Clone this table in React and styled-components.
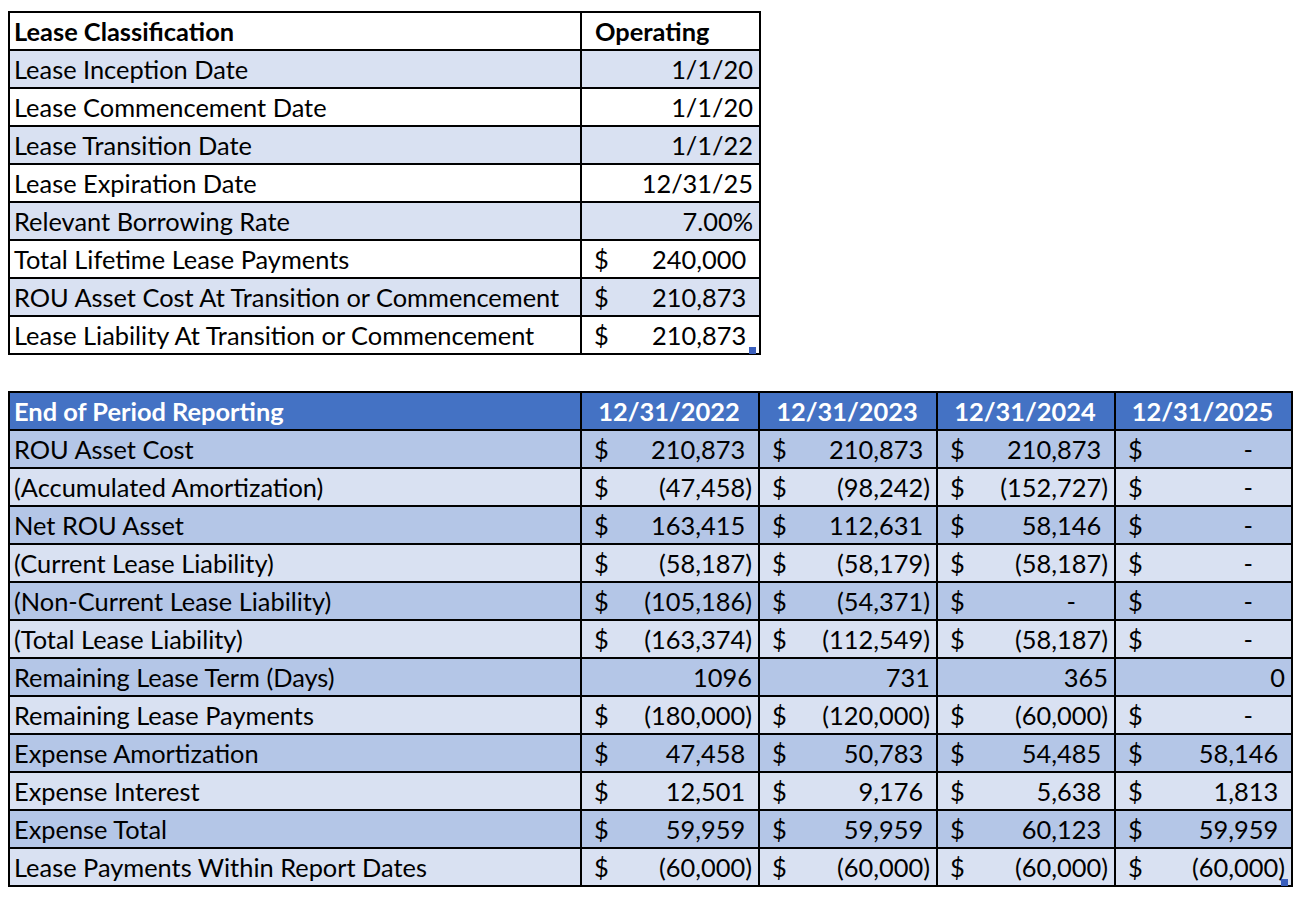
import React from "react";
import styled, { createGlobalStyle } from "styled-components";

const GlobalStyle = createGlobalStyle`
  body {
    margin: 0;
    background: #ffffff;
    font-family: "Lato", "Liberation Sans", sans-serif;
    color: #000;
  }
`;

const summary = [
  { label: "Lease Inception Date", value: "1/1/20" },
  { label: "Lease Commencement Date", value: "1/1/20" },
  { label: "Lease Transition Date", value: "1/1/22" },
  { label: "Lease Expiration Date", value: "12/31/25" },
  { label: "Relevant Borrowing Rate", value: "7.00%" },
  { label: "Total Lifetime Lease Payments", value: "240,000", money: true },
  { label: "ROU Asset Cost At Transition or Commencement", value: "210,873", money: true },
  { label: "Lease Liability At Transition or Commencement", value: "210,873", money: true },
];

const dates = ["12/31/2022", "12/31/2023", "12/31/2024", "12/31/2025"];

const report = [
  ["ROU Asset Cost", ["210,873", "210,873", "210,873", "-"]],
  ["(Accumulated Amortization)", ["(47,458)", "(98,242)", "(152,727)", "-"]],
  ["Net ROU Asset", ["163,415", "112,631", "58,146", "-"]],
  ["(Current Lease Liability)", ["(58,187)", "(58,179)", "(58,187)", "-"]],
  ["(Non-Current Lease Liability)", ["(105,186)", "(54,371)", "-", "-"]],
  ["(Total Lease Liability)", ["(163,374)", "(112,549)", "(58,187)", "-"]],
  ["Remaining Lease Term (Days)", ["1096", "731", "365", "0"], true],
  ["Remaining Lease Payments", ["(180,000)", "(120,000)", "(60,000)", "-"]],
  ["Expense Amortization", ["47,458", "50,783", "54,485", "58,146"]],
  ["Expense Interest", ["12,501", "9,176", "5,638", "1,813"]],
  ["Expense Total", ["59,959", "59,959", "60,123", "59,959"]],
  ["Lease Payments Within Report Dates", ["(60,000)", "(60,000)", "(60,000)", "(60,000)"]],
];

const Page = styled.div`
  display: flex;
  flex-direction: column;
  gap: 36px;
  padding: 11px 0 0 8px;
`;

const Sheet = styled.table`
  border-collapse: collapse;
  table-layout: fixed;
  font-size: 25.4px;
  line-height: 1;
`;

const Row = styled.tr`
  height: 38px;
  background: ${(p) => p.$bg};
`;

const Cell = styled.td`
  position: relative;
  border: 2px solid #000;
  padding: 2px 6px 0 4px;
  white-space: nowrap;
  font-weight: ${(p) => (p.$bold ? 700 : 400)};
  color: ${(p) => (p.$light ? "#fff" : "#000")};
  text-align: ${(p) => p.$align || "left"};
`;

const HeadText = styled.span`
  padding-left: ${(p) => p.$indent || 0}px;
`;

const Money = styled.div`
  display: flex;
  justify-content: space-between;
  padding-left: 8px;
`;

const Ghost = styled.span`
  visibility: hidden;
`;

const DashGap = styled.span`
  display: inline-block;
  width: 32px;
`;

const Handle = styled.span`
  position: absolute;
  right: 3px;
  bottom: -1px;
  width: 7px;
  height: 7px;
  background: #3a5fbd;
`;

function Amount({ value }) {
  if (value === "-") {
    return (
      <Money>
        <span>$</span>
        <span>
          -<DashGap />
        </span>
      </Money>
    );
  }
  const neg = value.startsWith("(");
  return (
    <Money>
      <span>$</span>
      <span>
        {value}
        {!neg && <Ghost>)</Ghost>}
      </span>
    </Money>
  );
}

export default function App() {
  return (
    <>
      <GlobalStyle />
      <Page>
        <Sheet style={{ width: 751 }}>
          <colgroup>
            <col style={{ width: 572 }} />
            <col style={{ width: 179 }} />
          </colgroup>
          <tbody>
            <Row $bg="#ffffff">
              <Cell $bold>Lease Classification</Cell>
              <Cell $bold>
                <HeadText $indent={9}>Operating</HeadText>
              </Cell>
            </Row>
            {summary.map((r, i) => (
              <Row key={r.label} $bg={i % 2 === 0 ? "#d9e1f2" : "#ffffff"}>
                <Cell>{r.label}</Cell>
                <Cell $align="right">
                  {r.money ? <Amount value={r.value} /> : r.value}
                  {i === summary.length - 1 && <Handle />}
                </Cell>
              </Row>
            ))}
          </tbody>
        </Sheet>

        <Sheet style={{ width: 1283 }}>
          <colgroup>
            <col style={{ width: 572 }} />
            <col style={{ width: 178 }} />
            <col style={{ width: 178 }} />
            <col style={{ width: 178 }} />
            <col style={{ width: 177 }} />
          </colgroup>
          <tbody>
            <Row $bg="#4472c4">
              <Cell $bold $light>End of Period Reporting</Cell>
              {dates.map((d) => (
                <Cell key={d} $bold $light $align="center">
                  {d}
                </Cell>
              ))}
            </Row>
            {report.map(([label, vals, plain], i) => (
              <Row key={label} $bg={i % 2 === 0 ? "#b4c6e7" : "#d9e1f2"}>
                <Cell>{label}</Cell>
                {vals.map((v, j) => (
                  <Cell key={j} $align="right">
                    {plain ? v : <Amount value={v} />}
                    {i === report.length - 1 && j === vals.length - 1 && <Handle />}
                  </Cell>
                ))}
              </Row>
            ))}
          </tbody>
        </Sheet>
      </Page>
    </>
  );
}
